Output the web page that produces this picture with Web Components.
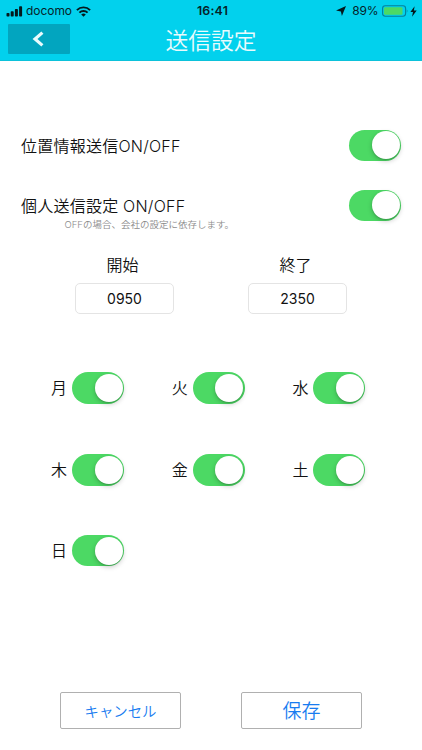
<!DOCTYPE html>
<html lang="ja">
<head>
<meta charset="utf-8">
<title>送信設定</title>
<style>
  body {
    margin: 0;
    background: #fff;
    font-family: Inter, "Noto Sans CJK JP", sans-serif;
    font-weight: 350;
    color: #111;
  }
</style>
</head>
<body>
<settings-page></settings-page>

<script>
class StatusBar extends HTMLElement {
  constructor () {
    super()
    this.shadow = this.attachShadow({ mode: 'open' })
  }

  connectedCallback () {
    this.shadow.innerHTML =
      /* html */`
      <style>
        :host{
          display: grid;
          grid-template-columns: 1fr auto 1fr;
          height: 22px;
          box-sizing: border-box;
          padding: 0 5px 0 6px;
          align-items: center;
          color: #062329;
          font-size: 12px;
          font-weight: 400;
          line-height: 22px;
        }

        .left, .right{
          display: flex;
          align-items: center;
        }

        .right{
          justify-content: flex-end;
        }

        .carrier{
          margin: 0 4px 0 3px;
          font-size: 12px;
          letter-spacing: -0.05px;
        }

        .time{
          padding-left: 2px;
          font-weight: 600;
          font-size: 12.4px;
          letter-spacing: 0.2px;
        }

        .percent{
          margin: 0 3px 0 6px;
          letter-spacing: -0.1px;
        }

        svg{
          display: block;
          flex: none;
        }
      </style>

      <div class="left">
        <svg width="17" height="11" viewBox="0 0 17 11" fill="#04191d">
          <rect x="0.5" y="7" width="3" height="3.5" rx="0.8"/>
          <rect x="4.7" y="5.2" width="3" height="5.3" rx="0.8"/>
          <rect x="8.9" y="3" width="3" height="7.5" rx="0.8"/>
          <rect x="13.1" y="0.3" width="3" height="10.2" rx="0.8"/>
        </svg>
        <span class="carrier">docomo</span>
        <svg width="15" height="11" viewBox="0 0 15 11">
          <g fill="none" stroke="#04191d" stroke-width="1.9">
            <path d="M0.9 4.1a9.4 9.4 0 0 1 13.2 0"/>
            <path d="M3.4 6.7a5.8 5.8 0 0 1 8.2 0"/>
          </g>
          <path fill="#04191d" d="M5.2 8.5a3.3 3.3 0 0 1 4.6 0L7.5 10.8z"/>
        </svg>
      </div>
      <span class="time">16:41</span>
      <div class="right">
        <svg width="10" height="10" viewBox="0 0 10 10" fill="#04191d">
          <path d="M10 0L5.9 10L4.9 5.4L0 4.6z"/>
        </svg>
        <span class="percent">89%</span>
        <svg width="27" height="12" viewBox="0 0 27 12">
          <rect x="0.6" y="0.8" width="23" height="10.4" rx="2.6" fill="none" stroke="#05809a" stroke-width="1.1"/>
          <rect x="2" y="2.2" width="18.5" height="7.6" rx="1.2" fill="#4cd964"/>
          <path d="M24.8 4.2q1.5 1.8 0 3.6z" fill="#05809a"/>
        </svg>
        <svg width="7" height="11" viewBox="0 0 7 11" fill="#04191d" style="margin-left:1.5px">
          <path d="M4.6 0.2L0.4 6H3L2 10.8L6.7 4.6H3.9z"/>
        </svg>
      </div>
    `
  }
}

customElements.define('status-bar', StatusBar)

class PageHeader extends HTMLElement {
  constructor () {
    super()
    this.shadow = this.attachShadow({ mode: 'open' })
  }

  connectedCallback () {
    this.shadow.innerHTML =
      /* html */`
      <style>
        :host{
          display: block;
          height: 61px;
          box-sizing: border-box;
          background: #02d1ed;
          border-bottom: 1px solid #0cc2da;
        }

        .bar{
          display: grid;
          grid-template-columns: 62px 1fr 62px;
          padding: 2px 8px 0;
        }

        button{
          display: flex;
          align-items: center;
          justify-content: center;
          height: 30px;
          padding: 0 2px 0 0;
          border: none;
          border-radius: 1px;
          background: #02a5bf;
        }

        h1{
          margin: 0;
          text-align: center;
          font-size: 22.8px;
          font-weight: 350;
          line-height: 33px;
          color: #e9fbfd;
        }
      </style>

      <status-bar></status-bar>
      <div class="bar">
        <button type="button" aria-label="戻る">
          <svg width="12" height="16" viewBox="0 0 12 16">
            <path d="M10.4 1.6L3 8l7.4 6.4" fill="none" stroke="#e9fbfd" stroke-width="3.2"/>
          </svg>
        </button>
        <h1><slot></slot></h1>
      </div>
    `
  }
}

customElements.define('page-header', PageHeader)

class ToggleSwitch extends HTMLElement {
  constructor () {
    super()
    this.shadow = this.attachShadow({ mode: 'open' })
  }

  connectedCallback () {
    this.shadow.innerHTML =
      /* html */`
      <style>
        :host{
          display: flex;
          flex: none;
          justify-content: flex-end;
          align-items: center;
          width: 52px;
          height: 31.5px;
          padding-right: 1.5px;
          box-sizing: border-box;
          border-radius: 16px;
          background: #4cd964;
        }

        .knob{
          width: 28px;
          height: 28px;
          border-radius: 50%;
          background: #fff;
          box-shadow: 0 2px 5px rgba(0, 0, 0, 0.22), 0 1px 1px rgba(0, 0, 0, 0.12);
        }
      </style>

      <div class="knob"></div>
    `
  }
}

customElements.define('toggle-switch', ToggleSwitch)

class SettingRow extends HTMLElement {
  constructor () {
    super()
    this.shadow = this.attachShadow({ mode: 'open' })
  }

  connectedCallback () {
    this.shadow.innerHTML =
      /* html */`
      <style>
        :host{
          display: flex;
          justify-content: space-between;
          align-items: flex-start;
          height: 60px;
          padding: 0 21px;
        }

        .label{
          padding-top: 4px;
          font-size: 16px;
          letter-spacing: 0.23px;
          line-height: 25px;
        }

        .note{
          padding-left: 43.5px;
          font-size: 9.5px;
          line-height: 11px;
          color: #8b8b8b;
        }
      </style>

      <div>
        <div class="label"><slot></slot></div>
        <div class="note"><slot name="note"></slot></div>
      </div>
      <toggle-switch></toggle-switch>
    `
  }
}

customElements.define('setting-row', SettingRow)

class TimeField extends HTMLElement {
  constructor () {
    super()
    this.shadow = this.attachShadow({ mode: 'open' })
  }

  connectedCallback () {
    this.shadow.innerHTML =
      /* html */`
      <style>
        :host{
          display: flex;
          flex-direction: column;
          gap: 6px;
          width: 99px;
          text-align: center;
        }

        .label{
          padding-right: 4px;
          font-size: 16px;
          line-height: 24px;
        }

        .value{
          height: 31px;
          box-sizing: border-box;
          border: 1px solid #e4e4e4;
          border-radius: 5px;
          font-size: 14px;
          font-weight: 400;
          line-height: 29px;
        }
      </style>

      <div class="label">${this.getAttribute('label')}</div>
      <div class="value"><slot></slot></div>
    `
  }
}

customElements.define('time-field', TimeField)

class DayToggle extends HTMLElement {
  constructor () {
    super()
    this.shadow = this.attachShadow({ mode: 'open' })
  }

  connectedCallback () {
    this.shadow.innerHTML =
      /* html */`
      <style>
        :host{
          display: flex;
          align-items: center;
          gap: 5px;
          height: 31.5px;
        }

        span{
          width: 16px;
          font-size: 16px;
          line-height: 24px;
        }
      </style>

      <span><slot></slot></span>
      <toggle-switch></toggle-switch>
    `
  }
}

customElements.define('day-toggle', DayToggle)

class ActionButton extends HTMLElement {
  constructor () {
    super()
    this.shadow = this.attachShadow({ mode: 'open' })
  }

  connectedCallback () {
    this.shadow.innerHTML =
      /* html */`
      <style>
        :host{
          display: block;
          width: 121px;
          font-size: 14.4px;
        }

        button{
          width: 100%;
          height: 37px;
          padding: 1px 0 0;
          border: 1px solid #b0b0b0;
          border-radius: 2px;
          background: #fff;
          color: #187cf0;
          font: inherit;
          line-height: 35px;
        }
      </style>

      <button type="button"><slot></slot></button>
    `
  }
}

customElements.define('action-button', ActionButton)

class SettingsPage extends HTMLElement {
  constructor () {
    super()
    this.shadow = this.attachShadow({ mode: 'open' })
  }

  connectedCallback () {
    this.render()
  }

  render () {
    this.shadow.innerHTML =
      /* html */`
      <style>
        :host{
          display: flex;
          flex-direction: column;
          width: 422px;
          height: 750px;
          overflow: hidden;
        }

        .settings{
          padding-top: 68.5px;
        }

        .times{
          display: flex;
          gap: 74px;
          padding: 3.5px 75px 0;
        }

        .days{
          display: grid;
          grid-template-columns: repeat(3, 120.7px);
          grid-template-rows: 32.5px 31px 31.5px;
          row-gap: 49.7px;
          padding: 58px 0 0 51px;
        }

        .actions{
          display: flex;
          gap: 60px;
          margin-top: auto;
          padding: 0 60px 21px;
        }

        .save{
          font-size: 19px;
        }
      </style>

      <page-header>送信設定</page-header>
      <div class="settings">
        <setting-row>位置情報送信ON/OFF</setting-row>
        <setting-row>個人送信設定 ON/OFF<span slot="note">OFFの場合、会社の設定に依存します。</span></setting-row>
      </div>
      <div class="times">
        <time-field label="開始">0950</time-field>
        <time-field label="終了">2350</time-field>
      </div>
      <div class="days">
        ${['月', '火', '水', '木', '金', '土', '日'].map(day => `<day-toggle>${day}</day-toggle>`).join('')}
      </div>
      <div class="actions">
        <action-button>キャンセル</action-button>
        <action-button class="save">保存</action-button>
      </div>
    `
  }
}

customElements.define('settings-page', SettingsPage)
</script>
</body>
</html>
